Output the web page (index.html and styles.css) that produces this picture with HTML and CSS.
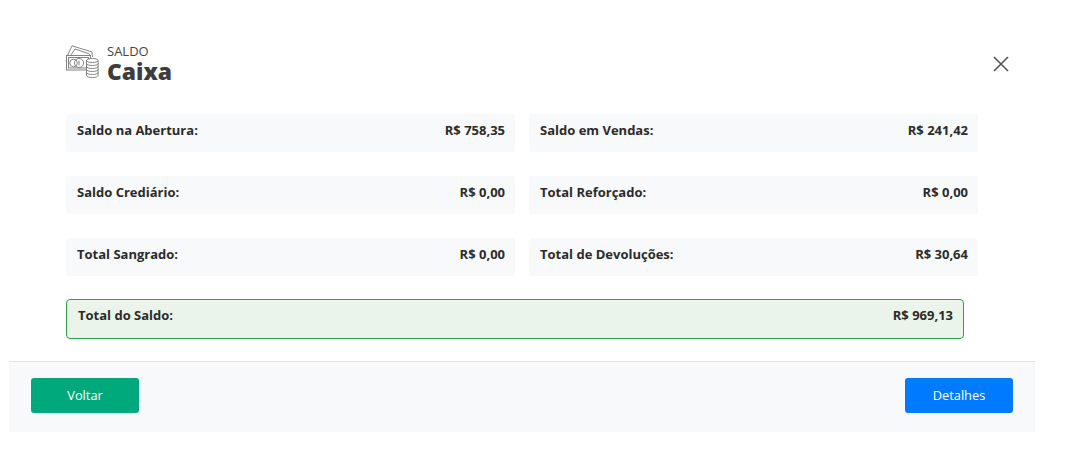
FILE: index.html
```html
<!DOCTYPE html>
<html lang="pt-BR">
<head>
<meta charset="utf-8">
<title>Saldo Caixa</title>
<link rel="stylesheet" href="styles.css">
</head>
<body>
<div class="modal">
  <header class="head">
    <svg class="icon" width="34" height="34" viewBox="0 0 34 34" fill="none" stroke="#777" stroke-width="0.9">
      <path d="M1.500 10.500 L6 0.800 L26 7 L26.500 12"/>
      <path d="M4.500 10.500 L9 4 L23.500 9 L24 11"/>
      <rect x="0.500" y="10.500" width="24" height="14.500"/>
      <rect x="2.500" y="12.500" width="20" height="10.500"/>
      <circle cx="13" cy="18" r="4.600"/>
      <circle cx="7.500" cy="18" r="3.800"/>
      <path d="M13 15.500v5"/>
      <path d="M20.500 15.500a5.800 2 0 0 1 11.600 0v15a5.800 2 0 0 1-11.600 0z" fill="#fff"/>
      <path d="M20.500 15.500a5.800 2 0 0 0 11.600 0M20.500 18.500a5.800 2 0 0 0 11.600 0M20.500 21.500a5.800 2 0 0 0 11.600 0M20.500 24.500a5.800 2 0 0 0 11.600 0M20.500 27.500a5.800 2 0 0 0 11.600 0"/>
    </svg>
    <div class="titles">
      <div class="kicker">SALDO</div>
      <h1 class="title">Caixa</h1>
    </div>
    <svg class="close" width="16" height="16" viewBox="0 0 16 16" stroke="#555" stroke-width="1.600" fill="none">
      <path d="M1 1 L15 15 M15 1 L1 15"/>
    </svg>
  </header>
  <section class="grid">
    <div class="cell"><span>Saldo na Abertura:</span><span>R$ 758,35</span></div>
    <div class="cell"><span>Saldo em Vendas:</span><span>R$ 241,42</span></div>
    <div class="cell"><span>Saldo Crediário:</span><span>R$ 0,00</span></div>
    <div class="cell"><span>Total Reforçado:</span><span>R$ 0,00</span></div>
    <div class="cell"><span>Total Sangrado:</span><span>R$ 0,00</span></div>
    <div class="cell"><span>Total de Devoluções:</span><span>R$ 30,64</span></div>
  </section>
  <div class="total"><span>Total do Saldo:</span><span>R$ 969,13</span></div>
  <footer class="foot">
    <button class="btn back">Voltar</button>
    <button class="btn details">Detalhes</button>
  </footer>
</div>
</body>
</html>
```
FILE: styles.css
```css
* { box-sizing: border-box; }
html, body { margin: 0; background: #fff; }
body { padding: 0 34px 27px 9px; font-family: "Open Sans", sans-serif; overflow: hidden; }
.modal { width: 1026px; padding-top: 44px; }
.head { display: flex; align-items: flex-start; height: 70px; padding: 0 26px 0 57px; }
.icon { margin-top: 1px; flex: none; }
.titles { margin-left: 7px; flex: 1; }
.kicker { font-size: 13px; line-height: 15px; color: #444; }
.title { margin: 0; font-size: 22.800px; line-height: 26px; font-weight: 800; color: #3d3d3d; }
.close { margin-top: 12px; }
.grid { display: grid; grid-template-columns: 449px 449px; column-gap: 14px; row-gap: 24px; padding-left: 57px; }
.cell { height: 38px; padding: 6px 10px 0 11px; display: flex; justify-content: space-between; align-items: flex-start; background: #f8f9fa; border-radius: 3px; font-size: 13px; line-height: 20px; font-weight: 700; color: #2b2b2b; }
.total { width: 898px; height: 40px; margin: 23px 0 22px 57px; padding: 5px 10px 0 11px; display: flex; justify-content: space-between; align-items: flex-start; background: #eaf4ea; border: 1px solid #28a745; border-radius: 4px; font-size: 13px; line-height: 20px; font-weight: 700; color: #2b2b2b; }
.foot { height: 71px; padding: 16px 22px 0; display: flex; justify-content: space-between; align-items: flex-start; background: #f8f9fa; border-top: 1px solid #e3e3e3; }
.btn { width: 108px; height: 35px; border: 0; border-radius: 3px; color: #fff; font-family: inherit; font-size: 12.800px; padding: 0 0 2px; }
.back { background: #00a97c; }
.details { background: #007bff; }
```
